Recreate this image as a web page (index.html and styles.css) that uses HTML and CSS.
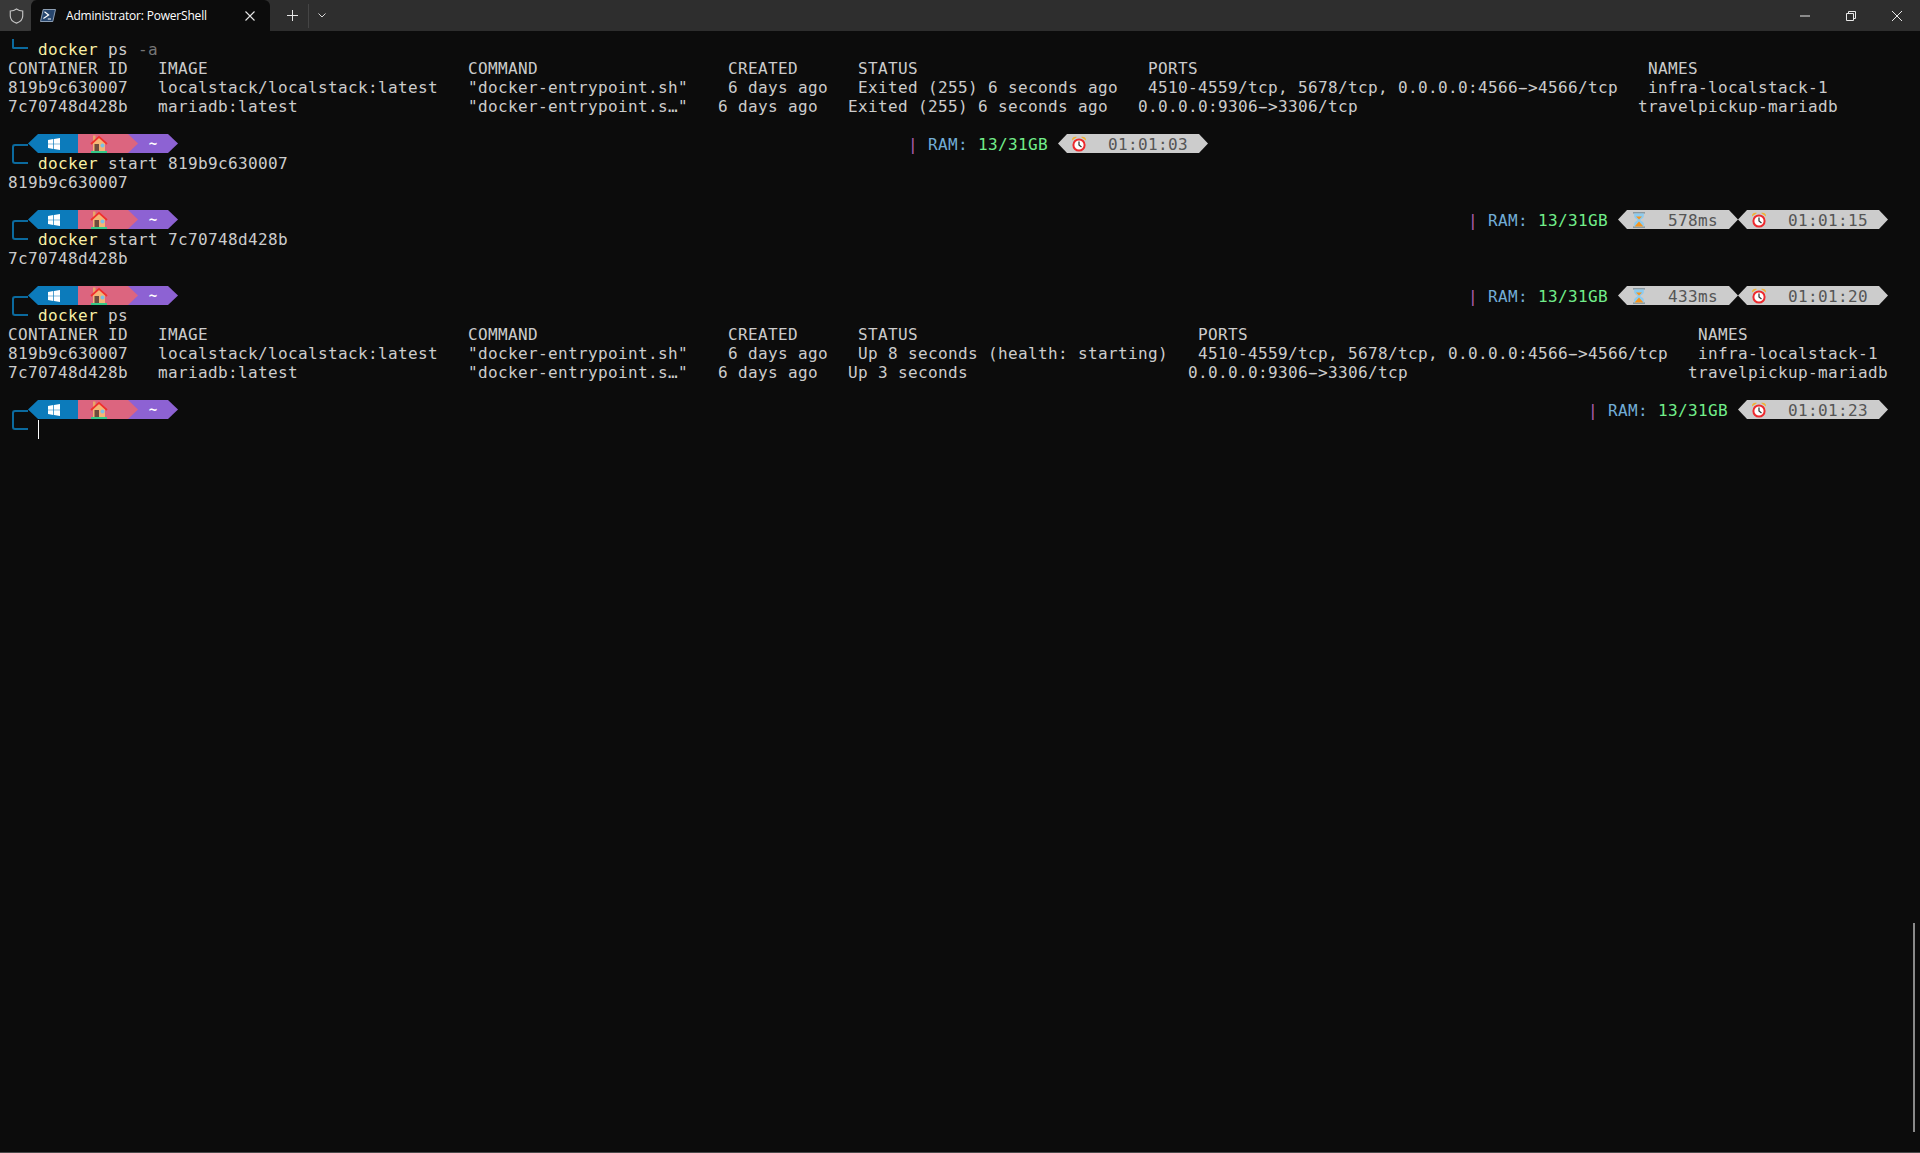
FILE: index.html
```html
<!DOCTYPE html>
<html lang="en">
<head>
<meta charset="utf-8">
<title>Administrator: PowerShell</title>
<link rel="stylesheet" href="styles.css">
</head>
<body>
<svg class="defs" width="0" height="0" aria-hidden="true">
  <defs>
    <symbol id="win" viewBox="0 0 12 12">
      <path fill="#fff" d="M0 1.9 5.3 1.1V5.7H0ZM6 1 12 0V5.7H6ZM0 6.3H5.3V10.9L0 10.1ZM6 6.3H12V12L6 11Z"/>
    </symbol>
    <symbol id="house" viewBox="0 0 18 18">
      <rect x="3" y="0.5" width="2.5" height="6" fill="#e8a66a"/>
      <path fill="#f4b576" d="M3 8 9 2.5 15 8V16H3Z"/>
      <path fill="none" stroke="#f0302c" stroke-width="1.7" d="M1 9 9 1.8 17 9"/>
      <rect x="4.5" y="9" width="4.5" height="7" fill="#6d4c3d"/>
      <circle cx="12.5" cy="10.5" r="2" fill="#7cc0e6"/>
      <rect x="1" y="16" width="16" height="2" fill="#35c98a"/>
    </symbol>
    <symbol id="clock" viewBox="0 0 14 16">
      <path fill="#f2b233" d="M0 4.5C-.2 1.5 2 .2 5 1ZM14 4.5C14.2 1.5 12 .2 9 1Z"/>
      <circle cx="7" cy="9" r="5.6" fill="#fff" stroke="#ee2a2e" stroke-width="2"/>
      <path fill="none" stroke="#3a3a3a" stroke-width="1.3" d="M7 5.5V9L9.5 11"/>
    </symbol>
    <symbol id="glass" viewBox="0 0 12 16">
      <rect x="0" y="0" width="12" height="1.6" fill="#8c9aa1"/>
      <rect x="0" y="14.4" width="12" height="1.6" fill="#8c9aa1"/>
      <path fill="#8ccbf0" d="M1.2 1.6H10.8V4C10.8 6.6 7.4 7 7.4 8S10.8 9.4 10.8 12V14.4H1.2V12C1.2 9.4 4.6 9 4.6 8S1.2 6.6 1.2 4Z"/>
      <path fill="#f7941d" d="M3 4.4H9L6 7.6ZM6 9.4 10.4 14.4H1.6Z"/>
    </symbol>
  </defs>
</svg>

<header class="titlebar">
  <div class="shield-btn">
    <svg class="shield" viewBox="0 0 16 18"><path d="M8 1.2C10 2.7 12.4 3.4 15 3.4V9C15 13 12 15.6 8 17 4 15.6 1 13 1 9V3.4C3.6 3.4 6 2.7 8 1.2Z"/></svg>
  </div>
  <div class="tab">
    <svg class="ps-icon" viewBox="0 0 16 13">
      <path class="ps-bg" d="M3.2.5H15.5L12.8 12.5H.5Z"/>
      <path class="ps-glyph" d="M4.5 2.8 8.6 6 3.4 9.4M7.8 10H11"/>
    </svg>
    <span class="tab-title">Administrator: PowerShell</span>
    <svg class="tab-close" viewBox="0 0 10 10"><path d="M.5.5 9.5 9.5M9.5.5.5 9.5"/></svg>
  </div>
  <svg class="tab-plus" viewBox="0 0 11 11"><path d="M5.5 0V11M0 5.5H11"/></svg>
  <span class="tab-sep"></span>
  <svg class="tab-chevron" viewBox="0 0 8 5"><path d="M.5.5 4 4 7.5.5"/></svg>
  <div class="window-controls">
    <svg class="wc wc-min" viewBox="0 0 10 10"><path d="M0 5H10"/></svg>
    <svg class="wc wc-max" viewBox="0 0 10 10"><path d="M.5 2.5H7.5V9.5H.5ZM2.5 2.5V.5H9.5V7.5H7.5"/></svg>
    <svg class="wc wc-close" viewBox="0 0 10 10"><path d="M0 0 10 10M10 0 0 10"/></svg>
  </div>
</header>

<main class="terminal">
  <div class="line"><span class="corner"></span>   <span class="cmd">docker</span> ps <span class="dim">-a</span></div>
  <div class="line">CONTAINER ID   IMAGE                          COMMAND                   CREATED      STATUS                       PORTS                                             NAMES</div>
  <div class="line">819b9c630007   localstack/localstack:latest   "docker-entrypoint.sh"    6 days ago   Exited (255) 6 seconds ago   4510-4559/tcp, 5678/tcp, 0.0.0.0:4566<span class="lig">-</span>&gt;4566/tcp   infra-localstack-1</div>
  <div class="line">7c70748d428b   mariadb:latest                 "docker-entrypoint.s…"   6 days ago   Exited (255) 6 seconds ago   0.0.0.0:9306<span class="lig">-</span>&gt;3306/tcp                            travelpickup-mariadb</div>
  <div class="line"></div>

  <div class="line prompt prompt-narrow">
    <span class="bracket"></span>
    <div class="segments">
      <span class="seg seg-win"><svg class="i-win"><use href="#win"/></svg></span>
      <span class="seg seg-home"><svg class="i-house"><use href="#house"/></svg></span>
      <span class="seg seg-path">~</span>
    </div>
    <div class="status">
      <span class="mem-text"><span class="bar">|</span> <span class="ram">RAM:</span> <span class="mem">13/31GB</span> </span><span class="pill pill-time"><svg class="i-clock"><use href="#clock"/></svg><span class="pill-text">01:01:03</span></span>
    </div>
  </div>
  <div class="line">   <span class="cmd">docker</span> start 819b9c630007</div>
  <div class="line">819b9c630007</div>
  <div class="line"></div>

  <div class="line prompt">
    <span class="bracket"></span>
    <div class="segments">
      <span class="seg seg-win"><svg class="i-win"><use href="#win"/></svg></span>
      <span class="seg seg-home"><svg class="i-house"><use href="#house"/></svg></span>
      <span class="seg seg-path">~</span>
    </div>
    <div class="status">
      <span class="mem-text"><span class="bar">|</span> <span class="ram">RAM:</span> <span class="mem">13/31GB</span> </span><span class="pill pill-dur"><svg class="i-glass"><use href="#glass"/></svg><span class="pill-text">578ms</span></span><span class="pill pill-time"><svg class="i-clock"><use href="#clock"/></svg><span class="pill-text">01:01:15</span></span>
    </div>
  </div>
  <div class="line">   <span class="cmd">docker</span> start 7c70748d428b</div>
  <div class="line">7c70748d428b</div>
  <div class="line"></div>

  <div class="line prompt">
    <span class="bracket"></span>
    <div class="segments">
      <span class="seg seg-win"><svg class="i-win"><use href="#win"/></svg></span>
      <span class="seg seg-home"><svg class="i-house"><use href="#house"/></svg></span>
      <span class="seg seg-path">~</span>
    </div>
    <div class="status">
      <span class="mem-text"><span class="bar">|</span> <span class="ram">RAM:</span> <span class="mem">13/31GB</span> </span><span class="pill pill-dur"><svg class="i-glass"><use href="#glass"/></svg><span class="pill-text">433ms</span></span><span class="pill pill-time"><svg class="i-clock"><use href="#clock"/></svg><span class="pill-text">01:01:20</span></span>
    </div>
  </div>
  <div class="line">   <span class="cmd">docker</span> ps</div>
  <div class="line">CONTAINER ID   IMAGE                          COMMAND                   CREATED      STATUS                            PORTS                                             NAMES</div>
  <div class="line">819b9c630007   localstack/localstack:latest   "docker-entrypoint.sh"    6 days ago   Up 8 seconds (health: starting)   4510-4559/tcp, 5678/tcp, 0.0.0.0:4566<span class="lig">-</span>&gt;4566/tcp   infra-localstack-1</div>
  <div class="line">7c70748d428b   mariadb:latest                 "docker-entrypoint.s…"   6 days ago   Up 3 seconds                      0.0.0.0:9306<span class="lig">-</span>&gt;3306/tcp                            travelpickup-mariadb</div>
  <div class="line"></div>

  <div class="line prompt">
    <span class="bracket"></span>
    <div class="segments">
      <span class="seg seg-win"><svg class="i-win"><use href="#win"/></svg></span>
      <span class="seg seg-home"><svg class="i-house"><use href="#house"/></svg></span>
      <span class="seg seg-path">~</span>
    </div>
    <div class="status">
      <span class="mem-text"><span class="bar">|</span> <span class="ram">RAM:</span> <span class="mem">13/31GB</span> </span><span class="pill pill-time"><svg class="i-clock"><use href="#clock"/></svg><span class="pill-text">01:01:23</span></span>
    </div>
  </div>
  <div class="line cursor-line"><span class="cursor"></span></div>
</main>

<div class="scrollbar"></div>
<div class="bottom-edge"></div>
</body>
</html>
```
FILE: styles.css
```css
* { box-sizing: border-box; }

html, body {
  margin: 0;
  height: 100%;
  overflow: hidden;
  background: #0c0c0c;
}

.defs { position: absolute; }

.titlebar {
  display: flex;
  align-items: center;
  height: 31px;
  background: #2e2e2e;
  font-family: "Open Sans", "Noto Sans", sans-serif;
  color: #fff;
}

.shield-btn {
  display: flex;
  align-items: center;
  justify-content: center;
  width: 33px;
  height: 31px;
  margin-right: -2px;
  background: #383838;
  border-bottom-right-radius: 5px;
}

.shield {
  width: 15px;
  height: 16px;
  fill: none;
  stroke: #c4c4c4;
  stroke-width: 1.3;
}

.tab {
  position: relative;
  display: flex;
  align-items: center;
  width: 239px;
  height: 31px;
  padding-left: 9px;
  background: #0c0c0c;
  border-radius: 6px 6px 0 0;
}

.ps-icon { width: 16px; height: 13px; }
.ps-bg { fill: #27466e; stroke: #a9bcd2; stroke-width: .8; }
.ps-glyph { fill: none; stroke: #fff; stroke-width: 1.2; }

.tab-title {
  margin-left: 10px;
  width: 179px;
  font-size: 12px;
  letter-spacing: -.2px;
  white-space: nowrap;
}

.tab-close {
  width: 10px;
  height: 10px;
  fill: none;
  stroke: #e6e6e6;
  stroke-width: 1.1;
}

.tab-plus {
  width: 11px;
  height: 11px;
  margin-left: 17px;
  fill: none;
  stroke: #e6e6e6;
  stroke-width: 1;
}

.tab-sep {
  width: 1px;
  height: 24px;
  margin-left: 10px;
  background: #454545;
}

.tab-chevron {
  width: 8px;
  height: 5px;
  margin-left: 9px;
  fill: none;
  stroke: #d8d8d8;
  stroke-width: 1;
}

.window-controls {
  display: flex;
  align-items: center;
  gap: 36px;
  margin-left: auto;
  padding-right: 18px;
}

.wc {
  width: 10px;
  height: 10px;
  fill: none;
  stroke: #e8e8e8;
  stroke-width: 1;
}

.terminal {
  padding: 9px 32px 0 8px;
  font-family: "DejaVu Sans Mono", "Liberation Mono", monospace;
  font-size: 16px;
  letter-spacing: .367px;
  color: #cccccc;
}

.line {
  position: relative;
  height: 19px;
  line-height: 19px;
  white-space: pre;
}

.cmd { color: #f9f1a5; }
.dim { color: #767676; }

.lig { text-shadow: 2px 0 0 #cccccc, -2px 0 0 #cccccc; }

.corner {
  position: absolute;
  left: 4px;
  top: -1px;
  width: 16px;
  height: 10px;
  border-left: 2px solid #0b6a9e;
  border-bottom: 2px solid #0b6a9e;
  border-bottom-left-radius: 2px;
}

.prompt {
  display: flex;
  justify-content: space-between;
}

.prompt-narrow { padding-right: 680px; }

.bracket {
  position: absolute;
  left: 4px;
  top: 9px;
  width: 16px;
  height: 20px;
  border: 2px solid #0b6a9e;
  border-right: 0;
  border-radius: 3px 0 0 3px;
}

.segments {
  display: flex;
  height: 19px;
  margin: -1px 0 0 20px;
}

.seg {
  position: relative;
  display: flex;
  align-items: center;
  justify-content: center;
  height: 19px;
}

.seg-win {
  width: 50px;
  padding-left: 2px;
  background: #0c7bbb;
  clip-path: polygon(10px 0, 100% 0, 100% 100%, 10px 100%, 0 50%);
}

.seg-home {
  z-index: 1;
  width: 60px;
  padding-right: 18px;
  background: #dc657f;
  clip-path: polygon(0 0, 50px 0, 60px 50%, 50px 100%, 0 100%);
}

.seg-path {
  width: 50px;
  margin-left: -10px;
  background: #8d62d3;
  color: #fff;
  font-size: 14px;
  font-weight: 700;
  letter-spacing: 0;
  clip-path: polygon(0 0, 40px 0, 50px 50%, 40px 100%, 0 100%);
}

.i-win { width: 12px; height: 12px; }
.i-house { width: 18px; height: 18px; }

.status { display: flex; }

.bar { color: #b05fb0; }
.ram { color: #72add6; }
.mem { color: #72ee8a; }

.pill {
  display: flex;
  align-items: center;
  height: 19px;
  margin-top: -1px;
  background: #cccccc;
  color: #555555;
  clip-path: polygon(9px 0, calc(100% - 9px) 0, 100% 50%, calc(100% - 9px) 100%, 9px 100%, 0 50%);
}

.pill-text { padding-top: 2px; }

.pill-time { width: 150px; padding-left: 14px; }
.pill-dur { width: 120px; padding-left: 15px; }

.i-clock { width: 14px; height: 16px; margin-right: 22px; }
.i-glass { width: 12px; height: 16px; margin-right: 23px; }

.cursor {
  position: absolute;
  left: 30px;
  top: 0;
  width: 1px;
  height: 19px;
  background: #ffffff;
}

.scrollbar {
  position: absolute;
  left: 1913px;
  top: 923px;
  width: 2px;
  height: 209px;
  background: #8a8a8a;
}

.bottom-edge {
  position: absolute;
  left: 0;
  right: 0;
  bottom: 0;
  height: 1px;
  background: #4a4a4a;
}
```
